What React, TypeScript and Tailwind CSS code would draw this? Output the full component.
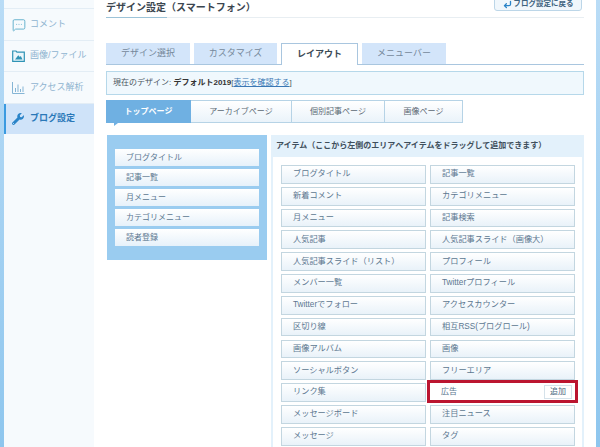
import { MessageSquareMore, CornerDownLeft } from "lucide-react"
import { FaWrench } from "react-icons/fa"

const font = { fontFamily: '"Liberation Sans", "Noto Sans CJK JP", sans-serif' }

const items = [
  "ブログタイトル", "記事一覧",
  "新着コメント", "カテゴリメニュー",
  "月メニュー", "記事検索",
  "人気記事", "人気記事スライド（画像大）",
  "人気記事スライド（リスト）", "プロフィール",
  "メンバー一覧", "Twitterプロフィール",
  "Twitterでフォロー", "アクセスカウンター",
  "区切り線", "相互RSS(ブログロール)",
  "画像アルバム", "画像",
  "ソーシャルボタン", "フリーエリア",
  "リンク集", "広告",
  "メッセージボード", "注目ニュース",
  "メッセージ", "タグ",
]

const leftItems = ["ブログタイトル", "記事一覧", "月メニュー", "カテゴリメニュー", "読者登録"]

function Grip() {
  return (
    <div className="w-[6px] self-stretch my-[2px] shrink-0 bg-[radial-gradient(#c9d6e2_0.6px,transparent_0.7px)] bg-[length:2px_2px]"></div>
  )
}

function ImageIcon() {
  return (
    <svg width="13" height="12" viewBox="0 0 13 12" className="text-[#2f93b5]">
      <path d="M.7 1V11.3H12.3V2.2H5L4 1Z" fill="#eaf6fb" stroke="currentColor" strokeWidth="1.2" />
      <path d="M3 9.5 6.3 5.2 7.8 7 8.8 6 10.5 9.5Z" fill="currentColor" />
    </svg>
  )
}

function ChartIcon() {
  return (
    <svg width="13" height="13" viewBox="0 0 13 13" fill="none" stroke="#85b5d5" strokeWidth="1">
      <path d="M.5 1V12.5H12.5" />
      <path d="M3.5 11V7M6 11V3.5M8.5 11V8M11 11V5.5" />
    </svg>
  )
}

function SideItem({ icon, label, active, h }: { icon: React.ReactNode; label: string; active?: boolean; h: string }) {
  return (
    <div
      className={
        active
          ? `${h} flex items-center gap-[4px] pl-[6px] border-l-[2px] border-[#3a9ae0] bg-[#cfe3f9] text-[#2a78b8] font-bold`
          : `${h} flex items-center gap-[4px] pl-[8px] border-b border-[#e3edf5] text-[#8fb4d0]`
      }
    >
      <span className="w-[14px] flex shrink-0">{icon}</span>
      <span className="text-[9px] whitespace-nowrap">{label}</span>
    </div>
  )
}

function Tab({ label, active, w }: { label: string; active?: boolean; w: string }) {
  return (
    <div
      className={
        active
          ? `${w} h-[22px] -mb-px flex items-center justify-center bg-white border border-b-0 border-[#a9c6df] text-[9px] font-bold text-[#3c4a55]`
          : `${w} h-[21px] flex items-center justify-center bg-[#d3e5fa] text-[9px] text-[#75889a]`
      }
    >
      {label}
    </div>
  )
}

export default function App() {
  return (
    <div style={font} className="w-[600px] h-[447px] overflow-hidden flex bg-white">
      <div className="w-[4px] shrink-0 bg-gradient-to-b from-[#b9dcf6] to-[#8ec6ee]"></div>

      <div className="w-[90px] shrink-0 bg-[#f6fafd]">
        <div className="h-[9px] border-b border-[#e3edf5]"></div>
        <SideItem h="h-[32px]" label="コメント" icon={<MessageSquareMore size={14} strokeWidth={1.5} className="text-[#55a9c8]" />} />
        <SideItem h="h-[31px]" label="画像/ファイル" icon={<ImageIcon />} />
        <SideItem h="h-[32px]" label="アクセス解析" icon={<ChartIcon />} />
        <SideItem h="h-[30px]" active label="ブログ設定" icon={<FaWrench size={12} className="text-[#2a84c8]" />} />
      </div>

      <div className="w-[478px] ml-[12px] shrink-0">
        <div className="h-[18px] flex justify-between border-b border-[#e8eef2] relative">
          <div className="h-[18px] w-[61px] border-b border-[#9cc3d8] text-[10px] leading-[15px] text-[#3b4650] font-bold whitespace-nowrap">
            デザイン設定（スマートフォン）
          </div>
          <div className="h-[22px] w-[88px] -mt-[11px] mr-[2px] pt-[8px] flex items-center justify-center gap-[2px] bg-[#f0f7fc] border border-[#bcd6e8] rounded-[3px] text-[7.5px] font-bold text-[#3f6480] whitespace-nowrap">
            <CornerDownLeft size={9} strokeWidth={3.5} className="text-[#2a84c8]" />
            ブログ設定に戻る
          </div>
        </div>

        <div className="mt-[25px] flex gap-[4px] border-b border-[#a9c6df]">
          <Tab label="デザイン選択" w="w-[84px]" />
          <Tab label="カスタマイズ" w="w-[83px]" />
          <Tab active label="レイアウト" w="w-[77px]" />
          <Tab label="メニューバー" w="w-[84px]" />
        </div>

        <div className="mt-[6px] h-[24px] flex items-center pl-[6px] bg-[#f0f8fd] border border-[#b6d8ea] text-[8px] text-[#4a5560] whitespace-nowrap">
          現在のデザイン:&nbsp;<span className="font-bold text-[#333]">デフォルト2019</span>
          <span>[</span>
          <span className="underline text-[#3a78b5]">表示を確認する</span>
          <span>]</span>
        </div>

        <div className="mt-[5px] flex h-[23px] w-[357px] relative">
          <div className="w-[85px] flex items-center justify-center bg-[#6fb0e2] text-white text-[8px] font-bold relative">
            トップページ
            <div className="absolute left-[8px] top-[23px] w-0 h-0 border-t-[3px] border-t-[#6fb0e2] border-r-[4px] border-r-transparent"></div>
          </div>
          <div className="w-[101px] flex items-center justify-center bg-gradient-to-b from-white to-[#eaf3fa] border-y border-r border-[#b6d3e6] text-[8px] text-[#5b6873]">
            アーカイブページ
          </div>
          <div className="w-[93px] flex items-center justify-center bg-gradient-to-b from-white to-[#eaf3fa] border-y border-r border-[#b6d3e6] text-[8px] text-[#5b6873]">
            個別記事ページ
          </div>
          <div className="w-[78px] flex items-center justify-center bg-gradient-to-b from-white to-[#eaf3fa] border-y border-r border-[#b6d3e6] text-[8px] text-[#5b6873]">
            画像ページ
          </div>
        </div>

        <div className="mt-[12px] flex gap-[4px] items-start">
          <div className="w-[160px] h-[125px] ml-[1px] shrink-0 bg-[#9accf0] pl-[8px] pr-[8px] pt-[14px] flex flex-col gap-[3px]">
            {leftItems.map((t) => (
              <div
                key={t}
                className="h-[17px] flex items-center bg-gradient-to-b from-white to-[#e6f1fa] pl-[1px] gap-[4px] text-[8px] text-[#5c7790]"
              >
                <Grip />
                <span>{t}</span>
              </div>
            ))}
          </div>

          <div className="w-[313px] shrink-0 bg-[#e3f1fb] px-[2px] pb-[2px]">
            <div className="h-[22px] flex items-center pl-[3px] text-[8px] font-bold text-[#3f4f5c] whitespace-nowrap">
              アイテム（ここから左側のエリアへアイテムをドラッグして追加できます）
            </div>
            <div className="bg-white pl-[8px] pt-[8px] pb-[10px] grid grid-cols-[145px_145px] gap-x-[4px] auto-rows-[18.8px] gap-y-[3.03px]">
              {items.map((t) => {
                const hit = t === "広告"
                return (
                  <div
                    key={t}
                    className={
                      hit
                        ? "h-[17px] flex items-center bg-white outline-[3px] outline-[#bb1530] pl-[1px] pr-[3px] text-[8px] text-[#5c7790] z-10"
                        : "flex items-center bg-gradient-to-b from-white to-[#e9f2f9] border border-[#c3d6e0] pl-[1px] text-[8.2px] text-[#5c7790] whitespace-nowrap"
                    }
                  >
                    <Grip />
                    <span className="ml-[4px] flex-1">{t}</span>
                    {hit && (
                      <span className="w-[28px] h-[14px] flex items-center justify-center border border-[#d5e2ea] text-[8px] text-[#4a6880]">
                        追加
                      </span>
                    )}
                  </div>
                )
              })}
            </div>
          </div>
        </div>
      </div>

      <div className="flex-1 ml-[12px] bg-gradient-to-b from-[#b9dcf6] to-[#8ec6ee]"></div>
    </div>
  )
}
